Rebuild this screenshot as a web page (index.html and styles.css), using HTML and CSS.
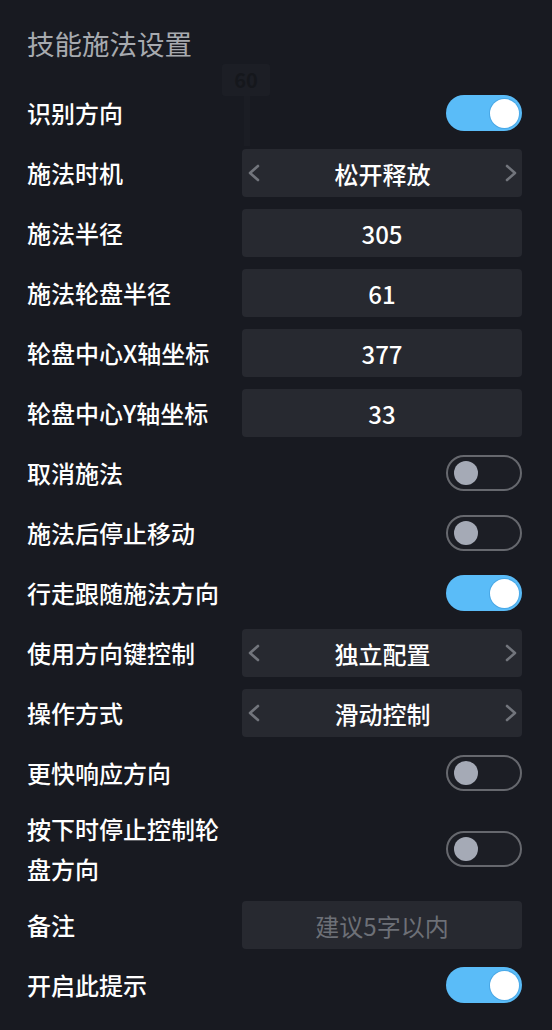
FILE: index.html
```html
<!DOCTYPE html>
<html lang="zh-CN">

<head>
  <meta charset="UTF-8">
  <meta name="viewport" content="width=device-width, initial-scale=1.0">
  <title>技能施法设置</title>
  <link rel="stylesheet" href="styles.css">
</head>

<body>
  <div class="panel">
    <div class="ghost-badge">60</div>
    <div class="ghost-stem"></div>
    <h1 class="title">技能施法设置</h1>

    <div class="settings">
      <div class="row">
        <span class="label">识别方向</span>
        <span class="switch on"><span class="knob"></span></span>
      </div>
      <div class="row">
        <span class="label">施法时机</span>
        <div class="field picker">
          <svg class="arrow" width="14" height="18" viewBox="0 0 14 18"><path d="M11 2 L3 9 L11 16" /></svg>
          <span>松开释放</span>
          <svg class="arrow" width="14" height="18" viewBox="0 0 14 18"><path d="M3 2 L11 9 L3 16" /></svg>
        </div>
      </div>
      <div class="row">
        <span class="label">施法半径</span>
        <div class="field">305</div>
      </div>
      <div class="row">
        <span class="label">施法轮盘半径</span>
        <div class="field">61</div>
      </div>
      <div class="row">
        <span class="label">轮盘中心X轴坐标</span>
        <div class="field">377</div>
      </div>
      <div class="row">
        <span class="label">轮盘中心Y轴坐标</span>
        <div class="field">33</div>
      </div>
      <div class="row">
        <span class="label">取消施法</span>
        <span class="switch"><span class="knob"></span></span>
      </div>
      <div class="row">
        <span class="label">施法后停止移动</span>
        <span class="switch"><span class="knob"></span></span>
      </div>
      <div class="row">
        <span class="label">行走跟随施法方向</span>
        <span class="switch on"><span class="knob"></span></span>
      </div>
      <div class="row">
        <span class="label">使用方向键控制</span>
        <div class="field picker">
          <svg class="arrow" width="14" height="18" viewBox="0 0 14 18"><path d="M11 2 L3 9 L11 16" /></svg>
          <span>独立配置</span>
          <svg class="arrow" width="14" height="18" viewBox="0 0 14 18"><path d="M3 2 L11 9 L3 16" /></svg>
        </div>
      </div>
      <div class="row">
        <span class="label">操作方式</span>
        <div class="field picker">
          <svg class="arrow" width="14" height="18" viewBox="0 0 14 18"><path d="M11 2 L3 9 L11 16" /></svg>
          <span>滑动控制</span>
          <svg class="arrow" width="14" height="18" viewBox="0 0 14 18"><path d="M3 2 L11 9 L3 16" /></svg>
        </div>
      </div>
      <div class="row">
        <span class="label">更快响应方向</span>
        <span class="switch"><span class="knob"></span></span>
      </div>
      <div class="row">
        <span class="label">按下时停止控制轮盘方向</span>
        <span class="switch"><span class="knob"></span></span>
      </div>
      <div class="row">
        <span class="label">备注</span>
        <div class="field placeholder">建议5字以内</div>
      </div>
      <div class="row">
        <span class="label">开启此提示</span>
        <span class="switch on"><span class="knob"></span></span>
      </div>
    </div>
  </div>
</body>

</html>
```

FILE: styles.css
```css
body {
  margin: 0;
  padding: 0;
  background-color: #181a21;
  font-family: "Noto Sans CJK SC", "Noto Sans", sans-serif;
  color: #ffffff;
}

.panel {
  position: relative;
  padding: 23px 30px 0 27px;
}

/* faint game scene behind the panel */
.ghost-badge {
  position: absolute;
  left: 222px;
  top: 64px;
  width: 48px;
  height: 32px;
  border-radius: 3px;
  background-color: #1c1e25;
  color: #15171c;
  font-size: 20px;
  font-weight: bold;
  line-height: 32px;
  text-align: center;
}

.ghost-stem {
  position: absolute;
  left: 244px;
  top: 96px;
  width: 6px;
  height: 50px;
  background-color: #1b1d24;
}

.title {
  position: relative;
  margin: 0 0 26px 0;
  font-size: 27.5px;
  font-weight: normal;
  line-height: 40px;
  color: #a7aaaf;
}

.settings {
  position: relative;
  display: flex;
  flex-direction: column;
  gap: 12px;
}

.row {
  display: grid;
  grid-template-columns: 1fr 280px;
  align-items: center;
  min-height: 48px;
}

.label {
  max-width: 205px;
  font-size: 24px;
  font-weight: 500;
  line-height: 40px;
  color: #ffffff;
}

.field {
  height: 48px;
  border-radius: 4px;
  background-color: #272930;
  display: flex;
  align-items: center;
  justify-content: center;
  font-size: 24px;
  font-weight: 500;
  color: #ffffff;
}

.picker {
  justify-content: space-between;
  padding: 0 4px 0 5px;
}

.arrow path {
  fill: none;
  stroke: #72757c;
  stroke-width: 2.6;
  stroke-linecap: round;
  stroke-linejoin: round;
}

.placeholder {
  color: #6d7077;
  font-weight: normal;
}

.switch {
  justify-self: end;
  box-sizing: border-box;
  width: 76px;
  height: 36px;
  border-radius: 18px;
  border: 2px solid #66686e;
  background-color: #1c1e25;
  display: flex;
  align-items: center;
  padding: 0 6px;
}

.switch .knob {
  width: 24px;
  height: 24px;
  border-radius: 50%;
  background-color: #a5aab6;
}

.switch.on {
  border: none;
  background-color: #5abcf8;
  justify-content: flex-end;
  padding: 0 3px;
}

.switch.on .knob {
  width: 29px;
  height: 29px;
  background-color: #ffffff;
  box-shadow: 0 0 0 1px #4aa8e6;
}
```
